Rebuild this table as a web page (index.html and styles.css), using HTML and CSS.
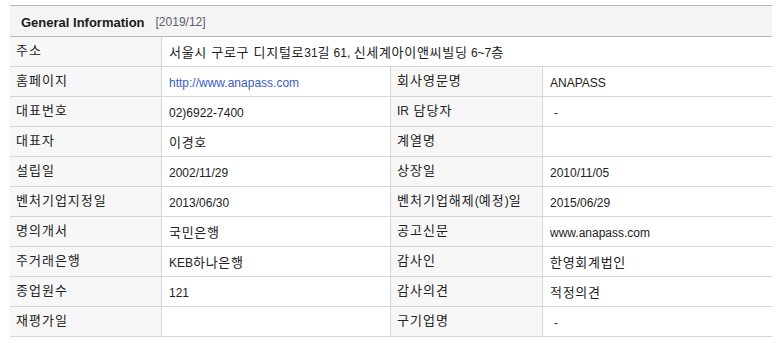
FILE: index.html
```html
<!DOCTYPE html>
<html lang="ko">
<head>
<meta charset="utf-8">
<title>General Information</title>
<link rel="stylesheet" href="styles.css">
</head>
<body>
<div class="wrap">
  <div class="info">
    <div class="head">
      <span class="title">General Information</span>
      <span class="date">[2019/12]</span>
    </div>
    <div class="grid">
      <div class="lbl">주소</div>
      <div class="val span3"><span class="ko">서울시 구로구 디지털로</span>31<span class="ko">길</span> 61, <span class="ko">신세계아이앤씨빌딩</span> 6~7<span class="ko">층</span></div>

      <div class="lbl">홈페이지</div>
      <div class="val"><a class="link" href="#">http://www.anapass.com</a></div>
      <div class="lbl">회사영문명</div>
      <div class="val last">ANAPASS</div>

      <div class="lbl">대표번호</div>
      <div class="val">02)6922-7400</div>
      <div class="lbl"><span class="lat">IR</span>&nbsp;담당자</div>
      <div class="val last dash">-</div>

      <div class="lbl">대표자</div>
      <div class="val"><span class="ko">이경호</span></div>
      <div class="lbl">계열명</div>
      <div class="val last"></div>

      <div class="lbl">설립일</div>
      <div class="val">2002/11/29</div>
      <div class="lbl">상장일</div>
      <div class="val last">2010/11/05</div>

      <div class="lbl">벤처기업지정일</div>
      <div class="val">2013/06/30</div>
      <div class="lbl">벤처기업해제<span class="lat">(</span>예정<span class="lat">)</span>일</div>
      <div class="val last">2015/06/29</div>

      <div class="lbl">명의개서</div>
      <div class="val"><span class="ko">국민은행</span></div>
      <div class="lbl">공고신문</div>
      <div class="val last">www.anapass.com</div>

      <div class="lbl">주거래은행</div>
      <div class="val">KEB<span class="ko">하나은행</span></div>
      <div class="lbl">감사인</div>
      <div class="val last"><span class="ko">한영회계법인</span></div>

      <div class="lbl">종업원수</div>
      <div class="val">121</div>
      <div class="lbl">감사의견</div>
      <div class="val last"><span class="ko">적정의견</span></div>

      <div class="lbl">재평가일</div>
      <div class="val"></div>
      <div class="lbl">구기업명</div>
      <div class="val last dash">-</div>
    </div>
  </div>
</div>
</body>
</html>
```

FILE: styles.css
```css
html, body {
  margin: 0;
  padding: 0;
  background: #ffffff;
}

body {
  font-family: "Liberation Sans", "Noto Sans CJK KR", sans-serif;
  font-size: 12px;
  color: #222222;
}

.wrap {
  padding: 5px 10px 0 10px;
}

.info {
  width: 762px;
}

.head {
  background: #f4f4f4;
  border-top: 1px solid #b9b9b9;
  border-bottom: 1px solid #b9b9b9;
  display: flex;
  align-items: center;
  padding: 2px 0 0 11px;
  height: 28px;
}

.title {
  font-weight: bold;
  font-size: 13px;
  color: #1a1a1a;
}

.date {
  margin-left: 11px;
  font-size: 12px;
  color: #5a5f6a;
}

.grid {
  display: grid;
  grid-template-columns: 152px 229px 152px 229px;
  grid-auto-rows: 30px;
}

.lbl,
.val {
  box-sizing: border-box;
  border-bottom: 1px solid #d6d6d6;
  border-right: 1px solid #d6d6d6;
  display: flex;
  align-items: center;
  line-height: 14px;
  white-space: pre;
}

.lbl {
  background: #f7f7f7;
  padding: 0 0 2px 6px;
  font-size: 13px;
  letter-spacing: 1px;
  color: #222222;
}

.val {
  background: #ffffff;
  padding: 2px 0 0 7px;
  color: #222222;
}

.val.last,
.val.span3 {
  border-right: none;
}

.span3 {
  grid-column: span 3;
}

.ko {
  font-size: 13px;
  letter-spacing: 0.7px;
}

.lat {
  font-size: 12px;
  letter-spacing: 0;
}

.dash {
  padding-left: 11px;
}

.link {
  color: #3a5bc7;
  text-decoration: none;
}
```
